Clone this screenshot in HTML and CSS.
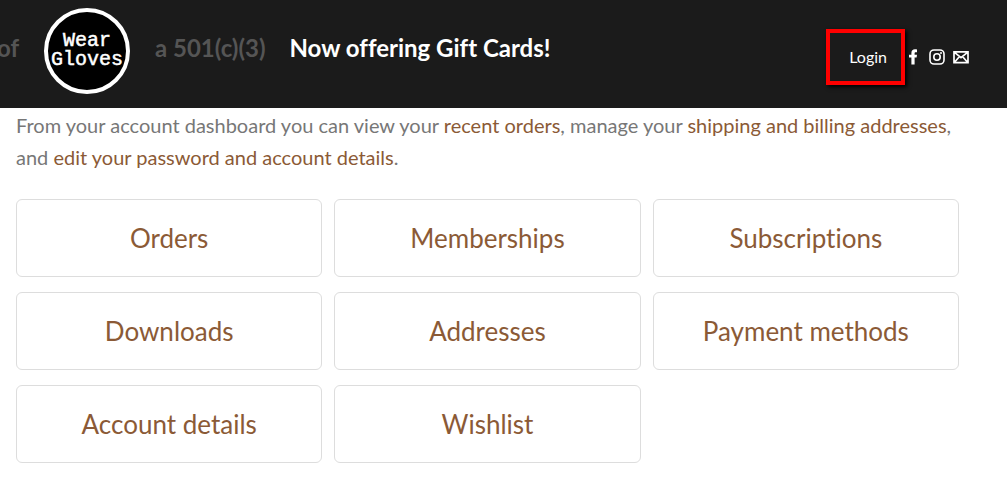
FILE: index.html
```html
<!DOCTYPE html>
<html lang="en">
<head>
<meta charset="utf-8">
<meta name="viewport" content="width=device-width, initial-scale=1">
<title>My account – Wear Gloves</title>
<link rel="stylesheet" href="styles.css">
</head>
<body>
<header class="site-header">
  <div class="ticker">
    <span class="ticker-text ticker-lead">of</span>
    <a class="logo" href="#" aria-label="Wear Gloves home">
      <svg class="logo-mark" viewBox="0 0 88 88" aria-hidden="true">
        <circle cx="44" cy="44" r="41" fill="#000" stroke="#fff" stroke-width="4"/>
        <text class="logo-text" x="44" y="39" text-anchor="middle">Wear</text>
        <text class="logo-text" x="44" y="58" text-anchor="middle">Gloves</text>
      </svg>
    </a>
    <span class="ticker-text">a 501(c)(3)</span>
    <strong class="ticker-text promo">Now offering Gift Cards!</strong>
  </div>
  <nav class="tools" aria-label="Account and social">
    <a class="login" href="#">Login</a>
    <div class="social">
      <a class="social-link" href="#" aria-label="Facebook">
        <svg class="icon icon-facebook" viewBox="0 0 8 16" aria-hidden="true"><path fill="#fff" d="M8 .4v2.800H6.800c-1 0-1.200.5-1.200 1.200V5.800H8l-.4 2.800h-2V15.500H2.400V8.600H0V5.800h2.400V4C2.400 1.600 3.800.3 5.900.3c.9 0 1.700 0 2.100.1z"/></svg>
      </a>
      <a class="social-link" href="#" aria-label="Instagram">
        <svg class="icon" viewBox="0 0 16 16" aria-hidden="true"><rect x="1" y="1" width="14" height="14" rx="4" fill="none" stroke="#fff" stroke-width="1.600"/><circle cx="8" cy="8" r="3.200" fill="none" stroke="#fff" stroke-width="1.600"/><circle cx="12" cy="4" r="1" fill="#fff"/></svg>
      </a>
      <a class="social-link" href="#" aria-label="Email">
        <svg class="icon" viewBox="0 0 16 16" aria-hidden="true"><path fill="none" stroke="#fff" stroke-width="1.700" d="M1 2.800h14v10.900H1zM1.500 3.300 8 8.700l6.500-5.400M1.500 13.200l4.800-5.500M14.500 13.200 9.700 7.700"/></svg>
      </a>
    </div>
  </nav>
</header>
<main class="account">
  <p class="intro">From your account dashboard you can view your <a href="#">recent orders</a>, manage your <a href="#">shipping and billing addresses</a>, and <a href="#">edit your password and account details</a>.</p>
  <nav class="links" aria-label="Account pages">
    <a class="card" href="#">Orders</a>
    <a class="card" href="#">Memberships</a>
    <a class="card" href="#">Subscriptions</a>
    <a class="card" href="#">Downloads</a>
    <a class="card" href="#">Addresses</a>
    <a class="card" href="#">Payment methods</a>
    <a class="card" href="#">Account details</a>
    <a class="card" href="#">Wishlist</a>
  </nav>
</main>
</body>
</html>
```
FILE: styles.css
```css
* {
  box-sizing: border-box;
}

body {
  margin: 0;
  background: #fff;
  color: #777;
  font-family: Lato, "Liberation Sans", sans-serif;
  font-size: 20px;
  font-variant-ligatures: none;
  line-height: 32px;
}

a {
  color: #8b5a36;
  text-decoration: none;
}

.site-header {
  display: flex;
  align-items: center;
  justify-content: space-between;
  padding: 7px 38px 13px 0;
  background: #1b1b1b;
  overflow: hidden;
}

.ticker {
  display: flex;
  align-items: center;
  gap: 24px;
}

.ticker-text {
  color: #555;
  font-size: 24px;
  font-weight: 700;
  line-height: 32px;
  white-space: nowrap;
  margin-bottom: 6px;
}

.ticker-lead {
  display: flex;
  justify-content: flex-end;
  width: 19px;
}

.promo {
  color: #fff;
}

.logo-mark {
  display: block;
  width: 88px;
  height: 88px;
}

.logo-text {
  fill: #fff;
  stroke: #fff;
  stroke-width: 0.5px;
  font-family: "Liberation Mono", monospace;
  font-size: 20px;
}

.tools {
  display: flex;
  align-items: center;
  padding-top: 12px;
}

.login {
  padding: 12px 14px 12px 19px;
  border: 4px solid #f00;
  box-shadow: 2px 2px 4px #000;
  color: #fff;
  font-size: 16px;
  line-height: 24px;
}

.social {
  display: flex;
  gap: 8px;
  padding-left: 4px;
}

.social-link {
  display: block;
}

.icon {
  display: block;
  width: 16px;
  height: 16px;
}

.icon-facebook {
  width: 8px;
  margin-right: 4px;
}

.account {
  padding: 1px 48px 24px 16px;
}

.intro {
  margin: 0 0 26px;
}

.links {
  display: grid;
  grid-template-columns: repeat(3, 1fr);
  gap: 15px 12px;
}

.card {
  padding: 22px 12px;
  border: 1px solid #ddd;
  border-radius: 6px;
  font-size: 26px;
  line-height: 32px;
  text-align: center;
}
```
